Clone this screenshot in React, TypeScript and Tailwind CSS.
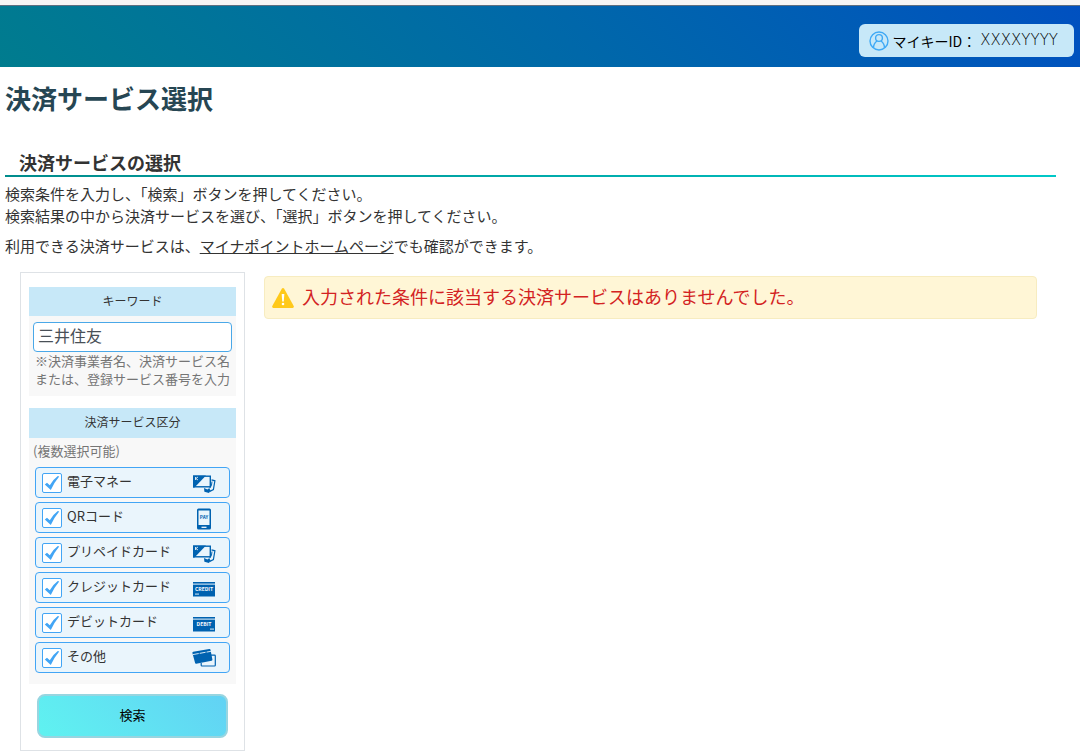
import { useState } from 'react';
import type { ReactNode } from 'react';

const EMoneyIcon = () => (
  <svg viewBox="0 0 24 24" className="size-6" aria-hidden="true">
    <path d="M19.5 8.8l3.4 1-1.5 8.8-3.6 1.8" fill="none" stroke="#0062b0" strokeWidth="1.2" />
    <path d="M20 10.5l-.6 4.2-2 2.6" fill="none" stroke="#0062b0" strokeWidth="1" />
    <path d="M12 17l3.4 1.4 1.8-1.2 1.4 2.4-1.6 2.4-4.6-1.2z" fill="#0062b0" />
    <rect x="1.7" y="5.2" width="16.6" height="10.6" fill="#eaf5fc" stroke="#0062b0" strokeWidth="1.4" />
    <path d="M1 4.5h13L2.5 16.5H1z" fill="#0062b0" />
    <path d="M3.5 6v3M6 6L3.8 7.5 6 9" fill="none" stroke="#fff" strokeWidth="0.8" />
  </svg>
);

const PhoneIcon = () => (
  <svg viewBox="0 0 24 24" className="size-6" aria-hidden="true">
    <rect x="5" y="2.5" width="14" height="21" rx="1.5" fill="#0062b0" />
    <rect x="6.5" y="4.5" width="11" height="14.5" fill="#eaf5fc" />
    <rect x="9.5" y="20.7" width="5" height="1.2" fill="#fff" />
    <text x="12" y="13.3" textAnchor="middle" fontSize="4.6" fontWeight="700" fill="#0062b0">PAY</text>
  </svg>
);

const BankCardIcon = ({ text, markX }: { text: string; markX: number }) => (
  <svg viewBox="0 0 24 24" className="size-6" aria-hidden="true">
    <rect x="1" y="6" width="22" height="14.5" fill="#0062b0" />
    <rect x="1" y="7.6" width="22" height="1" fill="#eaf5fc" />
    <text x="12" y="15" textAnchor="middle" fontSize="5" fontWeight="700" fill="#fff">{text}</text>
    <rect x={markX} y="17.5" width="4" height="1.2" fill="#b5d6ee" />
  </svg>
);

const OtherCardIcon = () => (
  <svg viewBox="0 0 24 24" className="size-6" aria-hidden="true">
    <path d="M19 9.2h3.5q.8 0 .8 .8v9.2q0 .8-.8 .8H10q-.8 0-.8-.8V17" fill="none" stroke="#0062b0" strokeWidth="1.2" />
    <path d="M1.2 5.8L17.3 3q1-.2 1.2 .8l1.9 9.7q.2 1-.8 1.2L4.3 17.8q-1 .2-1.2-.8L.4 7q-.2-1 .8-1.2z" fill="#0062b0" />
    <path d="M.8 8.6L19 5.3" stroke="#eaf5fc" strokeWidth="0.9" strokeDasharray="6 1" />
  </svg>
);

const UserIcon = () => (
  <svg viewBox="0 0 20 20" className="size-5" fill="none" stroke="#3fa9f5" strokeWidth="1.4" aria-hidden="true">
    <circle cx="10" cy="10" r="9" />
    <circle cx="10" cy="7" r="3.4" />
    <path d="M4.5 16.8c0-3.6 1.6-5.4 3.5-6.8M15.5 16.8c0-3.6-1.6-5.4-3.5-6.8" />
  </svg>
);

const WarningIcon = () => (
  <svg viewBox="0 0 22 20" className="h-5 w-[22px] shrink-0" aria-hidden="true">
    <path d="M9.8 .8q1.2-1.5 2.4 0L21.7 18q.6 1.8-1 1.9H1.3q-1.6-.1-1-1.9z" fill="#ffc91a" />
    <path d="M9.7 6h2.6l-.5 7.5h-1.6z" fill="#fff" />
    <circle cx="11" cy="16" r="1.3" fill="#fff" />
  </svg>
);

const categories: { id: string; label: string; icon: ReactNode }[] = [
  { id: 'emoney', label: '電子マネー', icon: <EMoneyIcon /> },
  { id: 'qr', label: 'QRコード', icon: <PhoneIcon /> },
  { id: 'prepaid', label: 'プリペイドカード', icon: <EMoneyIcon /> },
  { id: 'credit', label: 'クレジットカード', icon: <BankCardIcon text="CREDIT" markX={3} /> },
  { id: 'debit', label: 'デビットカード', icon: <BankCardIcon text="DEBIT" markX={18} /> },
  { id: 'other', label: 'その他', icon: <OtherCardIcon /> },
];

const App = () => {
  const [keyword, setKeyword] = useState('三井住友');
  const [selected, setSelected] = useState<string[]>(categories.map((c) => c.id));

  const toggle = (id: string) => {
    setSelected(selected.includes(id) ? selected.filter((s) => s !== id) : [...selected, id]);
  };

  return (
    <div className="min-h-screen bg-white font-['Noto_Sans_CJK_JP',sans-serif] text-[#333]">
      <div className="h-[5px] bg-[#f5f5f5]" />
      <header className="flex h-[62px] items-center justify-end border-t border-[#5f6f80] bg-linear-45 from-[#007c8e] to-[#0050c0] pt-2 pr-1.5">
        <div className="flex h-[33px] items-center rounded-md bg-[#c7e8f8] pr-4 pl-2.5 text-sm text-black">
          <UserIcon />
          <span className="ml-1">マイキーID：</span>
          <span className="ml-1 font-['DejaVu_Sans',sans-serif] text-[15px] font-extralight">XXXXYYYY</span>
        </div>
      </header>

      <main className="pr-6 pl-[5px]">
        <h1 className="mt-[11px] text-[26px] leading-10 font-bold text-[#264653]">決済サービス選択</h1>
        <h2 className="mt-8 pb-px pl-3.5 text-lg leading-6 font-bold">決済サービスの選択</h2>
        <div className="h-0.5 bg-linear-to-r from-[#008c8c] to-[#00c8c8]" />

        <p className="mt-1.5 text-[15px] leading-[22px]">
          検索条件を入力し、「検索」ボタンを押してください。
          <br />
          検索結果の中から決済サービスを選び、「選択」ボタンを押してください。
        </p>
        <p className="mt-2 text-[15px] leading-[22px]">
          利用できる決済サービスは、
          <a href="#" className="underline">マイナポイントホームページ</a>
          でも確認ができます。
        </p>

        <div className="mt-[15px] flex items-start pr-[19px] pl-[15px]">
          <form
            onSubmit={(e) => e.preventDefault()}
            className="w-[225px] shrink-0 border border-[#dee2e6] px-2 pt-[14px] pb-3"
          >
            <section className="bg-[#f8f8f8] pb-2">
              <label htmlFor="keyword" className="block bg-[#c7e8f8] pb-0.5 text-center text-xs leading-[27px]">
                キーワード
              </label>
              <div className="px-1 pt-1.5">
                <input
                  id="keyword"
                  type="text"
                  value={keyword}
                  onChange={(e) => setKeyword(e.target.value)}
                  className="block h-[30px] w-full rounded border border-[#4aa8e8] bg-white px-1 pb-1 text-base leading-6 text-[#495057]"
                />
                <p className="text-center text-[13px] leading-[18px] text-[#757575]">
                  ※決済事業者名、決済サービス名または、登録サービス番号を入力
                </p>
              </div>
            </section>

            <fieldset className="mt-3 bg-[#f8f8f8] pb-[11px]">
              <legend className="block w-full bg-[#c7e8f8] pb-0.5 text-center text-xs leading-[28px]">
                決済サービス区分
              </legend>
              <p className="px-1 pb-1 text-[13px] leading-[25px] text-[#757575]">(複数選択可能)</p>
              <div className="flex flex-col gap-1 px-1.5">
                {categories.map((category) => (
                  <label
                    key={category.id}
                    className="flex h-[31px] items-center rounded border border-[#42a5f5] bg-[#eaf5fc] pr-[13px] pl-1.5 text-[13px]"
                  >
                    <span className="grid size-5">
                      <input
                        type="checkbox"
                        checked={selected.includes(category.id)}
                        onChange={() => toggle(category.id)}
                        className="peer col-start-1 row-start-1 size-5 appearance-none rounded-xs border border-[#42a5f5] bg-white"
                      />
                      <svg
                        viewBox="0 0 20 20"
                        className="pointer-events-none invisible col-start-1 row-start-1 size-5 peer-checked:visible"
                        aria-hidden="true"
                      >
                        <path d="M2.8 11.4l2.2-1.6 2.8 2.5Q11 6.5 15.8 3l1.4 .5Q12.5 9 8.8 17z" fill="#42a5f5" />
                      </svg>
                    </span>
                    <span className="ml-[5px] flex-1 pb-1">{category.label}</span>
                    {category.icon}
                  </label>
                ))}
              </div>
            </fieldset>

            <div className="px-2 pt-2.5">
              <button
                type="submit"
                className="h-11 w-full rounded-lg border-2 border-[#98d5e0] bg-linear-45 from-[#5ff2f0] to-[#62d2f4] pb-0.5 text-[13px] text-black"
              >
                検索
              </button>
            </div>
          </form>

          <div
            role="alert"
            className="mt-1 ml-[19px] flex h-[43px] flex-1 items-center gap-2 rounded border border-[#f7ecc0] bg-[#fff6d6] px-[7px] text-lg leading-6 text-[#d32222]"
          >
            <WarningIcon />
            <span className="pb-1">入力された条件に該当する決済サービスはありませんでした。</span>
          </div>
        </div>
      </main>
    </div>
  );
};

export default App;
